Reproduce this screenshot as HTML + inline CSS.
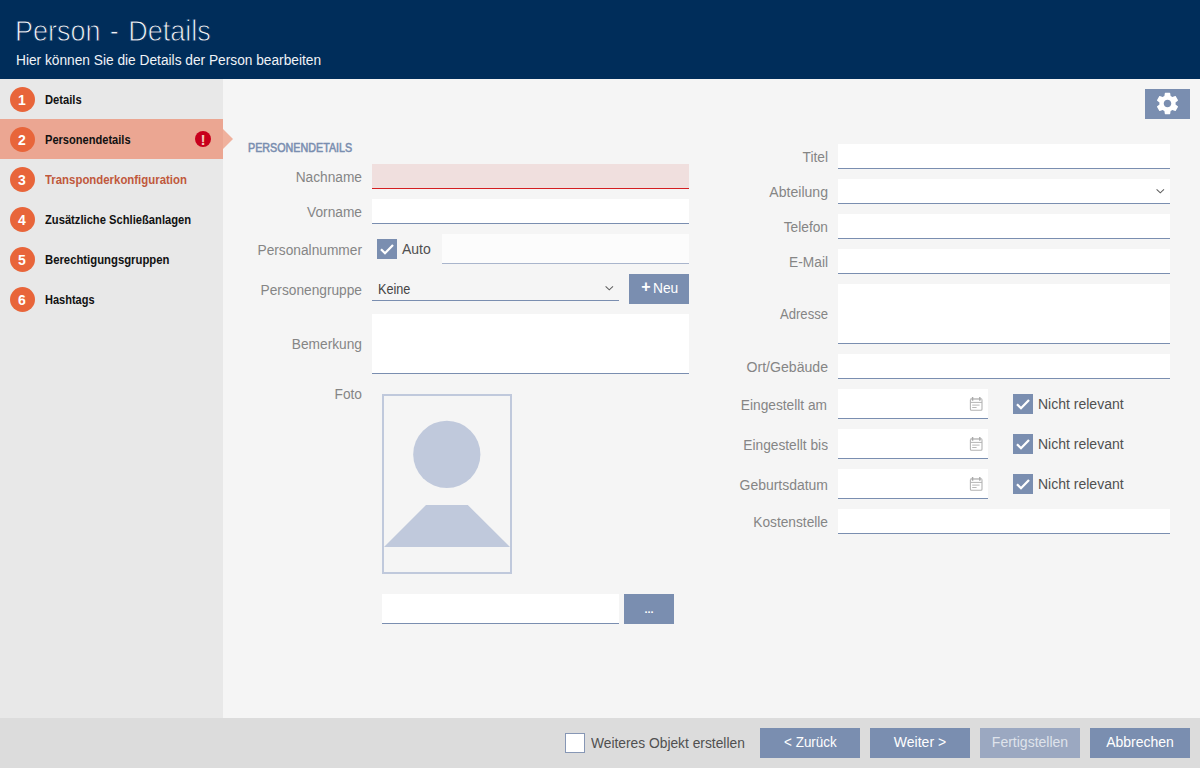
<!DOCTYPE html>
<html lang="de"><head><meta charset="utf-8"><title>Person - Details</title>
<style>
*{box-sizing:border-box;margin:0;padding:0}
html,body{width:1200px;height:768px;overflow:hidden;background:#f5f5f5;font-family:"Liberation Sans",sans-serif;}
.abs{position:absolute}
#hdr{position:absolute;left:0;top:0;width:1200px;height:79px;background:#002d5a;color:#fff}
#hdr h1{position:absolute;left:15px;top:13px;font-weight:400;font-size:30px;line-height:36px;color:#f0f3f7;-webkit-text-stroke:.9px #002d5a;white-space:nowrap;word-spacing:2px;transform:scaleX(.9);transform-origin:0 0}
#hdr p{position:absolute;left:16px;top:51px;font-size:14px;line-height:18px;color:#f0f3f7;white-space:nowrap;transform:scaleX(.98);transform-origin:0 0}
#side{position:absolute;left:0;top:79px;width:223px;height:639px;background:#e8e8e8}
.step{position:absolute;left:0;width:223px;height:40px}
.step .c{position:absolute;left:10px;top:8px;width:25px;height:25px;border-radius:50%;background:#e8653a;color:#fff;font-weight:700;font-size:14px;line-height:27px;text-align:center;text-indent:-1px}
.step .t{position:absolute;left:45px;top:1px;line-height:40px;font-size:12.5px;font-weight:700;color:#111;white-space:nowrap;transform:scaleX(.895);transform-origin:0 0}
.step.sel{background:#eba692}
.step.red .t{color:#c0583c}
#arrow{position:absolute;left:223px;top:129px;width:0;height:0;border-top:10px solid transparent;border-bottom:10px solid transparent;border-left:10px solid #f0b19d}
#err{position:absolute;left:195px;top:131.3px;width:16px;height:16px;border-radius:50%;background:#c8001c;color:#f6c8ba;font-weight:700;font-size:15.5px;line-height:18.6px;text-align:center}
.lbl{position:absolute;text-align:right;font-size:14px;line-height:18px;color:#858585;white-space:nowrap;transform:scaleX(.98);transform-origin:100% 0}
.inp{position:absolute;background:#fff;border-bottom:1px solid #7a8eb0}
.btn{position:absolute;background:#7a8eb0;color:#fff;font-size:14px;text-align:center;white-space:nowrap}
.cb{position:absolute;width:20px;height:20px;background:#7a8eb0}
.cbl{position:absolute;font-size:14px;line-height:20px;color:#505050;white-space:nowrap}
#foot{position:absolute;left:0;top:718px;width:1200px;height:50px;background:#dcdcdc}
</style></head><body>
<div id="hdr"><h1>Person - Details</h1><p>Hier können Sie die Details der Person bearbeiten</p></div>
<div id="side">
 <div class="step" style="top:0"><span class="c">1</span><span class="t">Details</span></div>
 <div class="step sel" style="top:40px"><span class="c">2</span><span class="t" style="transform:scaleX(0.886)">Personendetails</span></div>
 <div class="step red" style="top:80px"><span class="c">3</span><span class="t" style="transform:scaleX(0.912)">Transponderkonfiguration</span></div>
 <div class="step" style="top:120px"><span class="c">4</span><span class="t">Zusätzliche Schließanlagen</span></div>
 <div class="step" style="top:160px"><span class="c">5</span><span class="t" style="transform:scaleX(0.905)">Berechtigungsgruppen</span></div>
 <div class="step" style="top:200px"><span class="c">6</span><span class="t" style="transform:scaleX(0.88)">Hashtags</span></div>
</div>
<div id="arrow"></div>
<div id="err">!</div>

<!-- gear button -->
<div class="btn" style="left:1145px;top:89px;width:45px;height:30px">
<svg width="45" height="30" viewBox="0 0 45 30"><g transform="translate(9.54,1.55) scale(1.08)"><path fill="#fff" d="M19.43 12.98c.04-.32.07-.64.07-.98s-.03-.66-.07-.98l2.11-1.65c.19-.15.24-.42.12-.64l-2-3.46c-.12-.22-.39-.3-.61-.22l-2.49 1c-.52-.4-1.08-.73-1.69-.98l-.38-2.65C14.46 2.18 14.25 2 14 2h-4c-.25 0-.46.18-.49.42l-.38 2.65c-.61.25-1.17.59-1.69.98l-2.49-1c-.23-.09-.49 0-.61.22l-2 3.46c-.13.22-.07.49.12.64l2.11 1.65c-.04.32-.07.65-.07.98s.03.66.07.98l-2.11 1.65c-.19.15-.24.42-.12.64l2 3.46c.12.22.39.3.61.22l2.49-1c.52.4 1.08.73 1.69.98l.38 2.65c.03.24.24.42.49.42h4c.25 0 .46-.18.49-.42l.38-2.65c.61-.25 1.17-.59 1.69-.98l2.49 1c.23.09.49 0 .61-.22l2-3.46c.12-.22.07-.49-.12-.64l-2.11-1.65zM12 15.5c-1.93 0-3.5-1.57-3.5-3.5s1.57-3.5 3.5-3.5 3.5 1.57 3.5 3.5-1.57 3.5-3.5 3.5z"/></g></svg>
</div>

<!-- left column -->
<div class="abs" style="left:248px;top:140px;font-size:12px;line-height:16px;font-weight:400;-webkit-text-stroke:.55px #7a8eb0;color:#7a8eb0;white-space:nowrap;transform:scaleX(.895);transform-origin:0 0">PERSONENDETAILS</div>
<div class="lbl" style="left:232px;width:130px;top:168px">Nachname</div>
<div class="inp" style="left:372px;top:164px;width:317px;height:25px;background:#f0dfde;border-bottom-color:#d41f22"></div>
<div class="lbl" style="left:232px;width:130px;top:203px">Vorname</div>
<div class="inp" style="left:372px;top:199px;width:317px;height:25px"></div>
<div class="lbl" style="left:232px;width:130px;top:241px">Personalnummer</div>
<div class="cb" style="left:377px;top:239px"><svg width="20" height="20" viewBox="0 0 20 20"><path d="M4 10.2 8 14.2 16 6" fill="none" stroke="#fff" stroke-width="2.3"/></svg></div>
<div class="cbl" style="left:402px;top:239px">Auto</div>
<div class="inp" style="left:442px;top:234px;width:247px;height:30px;background:#fcfcfc;border-bottom-color:#a9b5cc"></div>
<div class="lbl" style="left:232px;width:130px;top:281px">Personengruppe</div>
<div class="inp" style="left:372px;top:274px;width:247px;height:27px;background:transparent"></div>
<div class="cbl" style="left:377.5px;top:279px;color:#444;transform:scaleX(.905);transform-origin:0 0">Keine</div>
<svg class="abs" style="left:603px;top:284px" width="12" height="8" viewBox="0 0 12 8"><path d="M2.6 2.4 6.3 5.8 10 2.4" fill="none" stroke="#5e5e5e" stroke-width="1.05"/></svg>
<div class="btn" style="left:629px;top:274px;width:60px;height:30px"><b style="position:absolute;left:12.3px;top:4px;font-size:16px;line-height:18px">+</b><span style="position:absolute;left:24px;top:5px;font-size:14.5px;line-height:18px;transform:scaleX(.95);transform-origin:0 0">Neu</span></div>
<div class="lbl" style="left:232px;width:130px;top:335px">Bemerkung</div>
<div class="inp" style="left:372px;top:314px;width:317px;height:60px"></div>
<div class="lbl" style="left:232px;width:130px;top:385px">Foto</div>
<div class="abs" style="left:382px;top:394px;width:130px;height:180px;border:2px solid #c0c9dc"></div>
<svg class="abs" style="left:382px;top:394px" width="130" height="180" viewBox="0 0 130 180"><circle cx="64.8" cy="60.4" r="33.6" fill="#c0c9dc"/><path d="M44 111H85.8L128 153H2Z" fill="#c0c9dc"/></svg>
<div class="inp" style="left:382px;top:594px;width:237px;height:30px"></div>
<div class="btn" style="left:624px;top:594px;width:50px;height:30px;line-height:30px;font-weight:700;font-size:11px">...</div>

<!-- right column -->
<div class="lbl" style="left:698px;width:130px;top:148px">Titel</div>
<div class="inp" style="left:838px;top:144px;width:332px;height:25px"></div>
<div class="lbl" style="left:698px;width:130px;top:183px;transform:scaleX(1.005)">Abteilung</div>
<div class="inp" style="left:838px;top:179px;width:332px;height:25px"></div>
<svg class="abs" style="left:1154px;top:187px" width="12" height="8" viewBox="0 0 12 8"><path d="M2.6 2.4 6.3 5.8 10 2.4" fill="none" stroke="#5e5e5e" stroke-width="1.05"/></svg>
<div class="lbl" style="left:698px;width:130px;top:218px">Telefon</div>
<div class="inp" style="left:838px;top:214px;width:332px;height:25px"></div>
<div class="lbl" style="left:698px;width:130px;top:253px">E-Mail</div>
<div class="inp" style="left:838px;top:249px;width:332px;height:25px"></div>
<div class="lbl" style="left:698px;width:130px;top:305px;transform:scaleX(0.935)">Adresse</div>
<div class="inp" style="left:838px;top:284px;width:332px;height:60px"></div>
<div class="lbl" style="left:698px;width:130px;top:358px;transform:scaleX(1.007)">Ort/Gebäude</div>
<div class="inp" style="left:838px;top:354px;width:332px;height:25px"></div>

<div class="lbl" style="left:697px;width:130px;top:396px;transform:scaleX(0.98)">Eingestellt am</div>
<div class="inp" style="left:838px;top:389px;width:150px;height:30px"></div>
<svg class="abs" style="left:968px;top:396px" width="16" height="16" viewBox="0 0 16 16" fill="none" stroke="#b4b4b4"><rect x="2.4" y="2.9" width="11.6" height="11.3" rx="1" stroke-width="1.1"/><path d="M2.4 3.3H14" stroke-width="1.5" stroke="#cdcdcd"/><path d="M2.4 6.4H14" stroke-width="1"/><path d="M4.6 1v3.8M11.8 1v3.8" stroke-width="1.4" stroke="#aaa"/><path d="M4.2 9.1H11.6M4.2 11.5H8.6" stroke-width="1" stroke="#b8b8b8"/></svg>
<div class="cb" style="left:1013px;top:394px"><svg width="20" height="20" viewBox="0 0 20 20"><path d="M4 10.2 8 14.2 16 6" fill="none" stroke="#fff" stroke-width="2.3"/></svg></div>
<div class="cbl" style="left:1038px;top:394px">Nicht relevant</div>

<div class="lbl" style="left:698px;width:130px;top:436px">Eingestellt bis</div>
<div class="inp" style="left:838px;top:429px;width:150px;height:30px"></div>
<svg class="abs" style="left:968px;top:436px" width="16" height="16" viewBox="0 0 16 16" fill="none" stroke="#b4b4b4"><rect x="2.4" y="2.9" width="11.6" height="11.3" rx="1" stroke-width="1.1"/><path d="M2.4 3.3H14" stroke-width="1.5" stroke="#cdcdcd"/><path d="M2.4 6.4H14" stroke-width="1"/><path d="M4.6 1v3.8M11.8 1v3.8" stroke-width="1.4" stroke="#aaa"/><path d="M4.2 9.1H11.6M4.2 11.5H8.6" stroke-width="1" stroke="#b8b8b8"/></svg>
<div class="cb" style="left:1013px;top:434px"><svg width="20" height="20" viewBox="0 0 20 20"><path d="M4 10.2 8 14.2 16 6" fill="none" stroke="#fff" stroke-width="2.3"/></svg></div>
<div class="cbl" style="left:1038px;top:434px">Nicht relevant</div>

<div class="lbl" style="left:698px;width:130px;top:476px;transform:scaleX(0.997)">Geburtsdatum</div>
<div class="inp" style="left:838px;top:469px;width:150px;height:30px"></div>
<svg class="abs" style="left:968px;top:476px" width="16" height="16" viewBox="0 0 16 16" fill="none" stroke="#b4b4b4"><rect x="2.4" y="2.9" width="11.6" height="11.3" rx="1" stroke-width="1.1"/><path d="M2.4 3.3H14" stroke-width="1.5" stroke="#cdcdcd"/><path d="M2.4 6.4H14" stroke-width="1"/><path d="M4.6 1v3.8M11.8 1v3.8" stroke-width="1.4" stroke="#aaa"/><path d="M4.2 9.1H11.6M4.2 11.5H8.6" stroke-width="1" stroke="#b8b8b8"/></svg>
<div class="cb" style="left:1013px;top:474px"><svg width="20" height="20" viewBox="0 0 20 20"><path d="M4 10.2 8 14.2 16 6" fill="none" stroke="#fff" stroke-width="2.3"/></svg></div>
<div class="cbl" style="left:1038px;top:474px">Nicht relevant</div>

<div class="lbl" style="left:698px;width:130px;top:513px">Kostenstelle</div>
<div class="inp" style="left:838px;top:509px;width:332px;height:25px"></div>

<!-- footer -->
<div id="foot"></div>
<div class="abs" style="left:565px;top:733px;width:20px;height:20px;background:#fff;border:1px solid #8797b5"></div>
<div class="cbl" style="left:591px;top:733px;transform:scaleX(.985);transform-origin:0 0">Weiteres Objekt erstellen</div>
<div class="btn" style="left:760px;top:728px;width:100px;height:30px;line-height:29px"><span style="display:inline-block;transform:scaleX(.96)">&lt; Zurück</span></div>
<div class="btn" style="left:870px;top:728px;width:100px;height:30px;line-height:29px">Weiter &gt;</div>
<div class="btn" style="left:980px;top:728px;width:100px;height:30px;line-height:29px;background:#9ba8c1;color:#dfe3eb">Fertigstellen</div>
<div class="btn" style="left:1090px;top:728px;width:100px;height:30px;line-height:29px">Abbrechen</div>
</body></html>
